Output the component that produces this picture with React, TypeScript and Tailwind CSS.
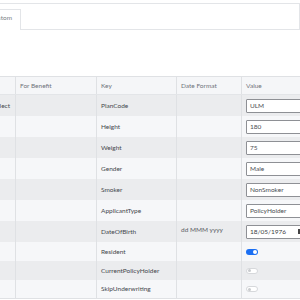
import React from 'react';

type Row = {
  first?: string;
  key: string;
  format?: string;
  value?: string;
  kind: 'input' | 'date' | 'on' | 'off';
  h: string;
};

const rows: Row[] = [
  { first: 'Select', key: 'PlanCode', value: 'ULM', kind: 'input', h: 'h-[21px]' },
  { key: 'Height', value: '180', kind: 'input', h: 'h-[21px]' },
  { key: 'Weight', value: '75', kind: 'input', h: 'h-[21px]' },
  { key: 'Gender', value: 'Male', kind: 'input', h: 'h-[21px]' },
  { key: 'Smoker', value: 'NonSmoker', kind: 'input', h: 'h-[21px]' },
  { key: 'ApplicantType', value: 'PolicyHolder', kind: 'input', h: 'h-[21px]' },
  { key: 'DateOfBirth', format: 'dd MMM yyyy', value: '18/05/1976', kind: 'date', h: 'h-[21px]' },
  { key: 'Resident', kind: 'on', h: 'h-[19px]' },
  { key: 'CurrentPolicyHolder', kind: 'off', h: 'h-[19px]' },
  { key: 'SkipUnderwriting', kind: 'off', h: 'h-[18px]' },
];

function Toggle({ on }: { on: boolean }) {
  if (on) {
    return (
      <div className="w-[12px] h-[6px] rounded-full bg-[#1b6ff3] flex items-center justify-end pr-[1px]">
        <div className="w-[4px] h-[4px] rounded-full bg-white" />
      </div>
    );
  }
  return (
    <div className="w-[12px] h-[6px] rounded-full border border-[#d6d8db] bg-white flex items-center pl-[1px]">
      <div className="w-[3px] h-[3px] rounded-full bg-[#c9cbce]" />
    </div>
  );
}

export default function App() {
  return (
    <div className="w-[300px] h-[300px] bg-white overflow-hidden font-['Lato',sans-serif] text-[6.5px]">
      <div className="mt-[3px] h-[27px] border-t border-r border-b border-[#e3e5e8] flex items-end">
        <div className="w-[21px] h-[21px] bg-white border-t border-r border-[#e3e5e8] flex items-center justify-end pr-[8px] pb-[4px] overflow-hidden whitespace-nowrap text-[#7a7f86] -mb-px">
          Custom
        </div>
      </div>

      <div className="mt-[46px] border-t border-b border-[#dfe1e4]">
        <div className="grid grid-cols-[16px_81px_80px_65px_1fr] h-[18px] bg-[#f5f6f8] text-[#6f747b] border-b border-[#e3e5e8]">
          <div className="border-r border-[#dfe1e4]" />
          <div className="border-r border-[#dfe1e4] pl-[4px] flex items-center">For Benefit</div>
          <div className="border-r border-[#dfe1e4] pl-[4px] flex items-center">Key</div>
          <div className="border-r border-[#dfe1e4] pl-[4px] flex items-center">Date Format</div>
          <div className="pl-[4px] flex items-center">Value</div>
        </div>
        {rows.map((r, i) => (
          <div
            key={r.key}
            className={`grid grid-cols-[16px_81px_80px_65px_1fr] ${r.h} ${i % 2 === 0 ? 'bg-[#ebecee]' : 'bg-[#f6f7f9]'} text-[#45484d]`}
          >
            <div className="border-r border-[#dfe1e4] flex items-center justify-end pr-[5px] overflow-hidden whitespace-nowrap">
              {r.first}
            </div>
            <div className="border-r border-[#dfe1e4]" />
            <div className="border-r border-[#dfe1e4] pl-[4px] flex items-center whitespace-nowrap overflow-hidden">
              {r.key}
            </div>
            <div className="border-r border-[#dfe1e4] pl-[4px] pb-[4px] flex items-center text-[#5c6066] whitespace-nowrap">
              {r.format}
            </div>
            <div className="pl-[4px] flex items-center overflow-hidden">
              {r.kind === 'input' && (
                <div className="w-[70px] shrink-0 h-[14px] border border-[#8e9095] bg-white rounded-[1px] px-[3px] flex items-center text-[#4a4d52]">
                  {r.value}
                </div>
              )}
              {r.kind === 'date' && (
                <div className="w-[70px] shrink-0 h-[14px] border border-[#8e9095] bg-white rounded-[1px] px-[3px] flex items-center justify-between text-[#3a3d42]">
                  <span>{r.value}</span>
                  <span className="w-[3px] h-[5px] bg-[#444] mr-[11px]" />
                </div>
              )}
              {r.kind === 'on' && <Toggle on />}
              {r.kind === 'off' && <Toggle on={false} />}
            </div>
          </div>
        ))}
      </div>
    </div>
  );
}
